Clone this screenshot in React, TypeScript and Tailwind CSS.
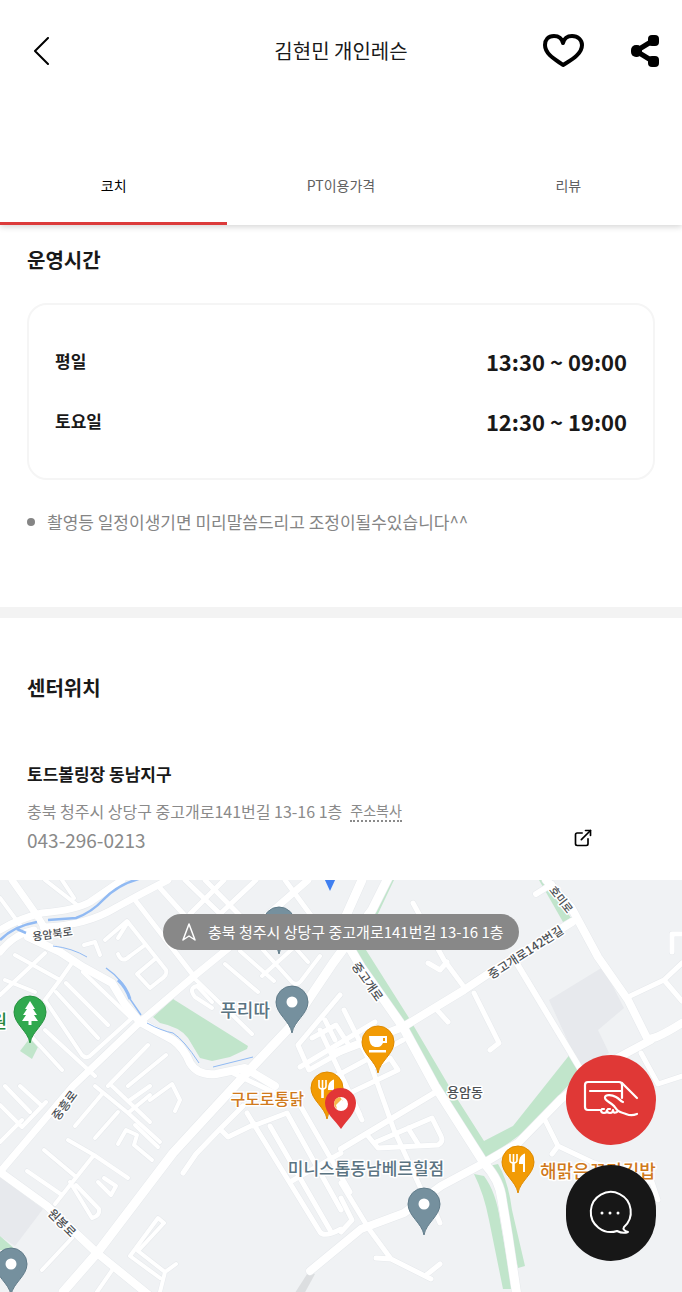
import { useState } from "react";
import { ExternalLink } from "lucide-react";

const tabs = ["코치", "PT이용가격", "리뷰"];

const hours = [
  { day: "평일", time: "13:30 ~ 09:00" },
  { day: "토요일", time: "12:30 ~ 19:00" },
];

const address = "충북 청주시 상당구 중고개로141번길 13-16 1층";

const roads = [
  // side streets, north west
  { w: 4, d: "M0 115L45 73M15 75L60 100L74 80M5 100L35 112M60 100L45 120L82 175Q87 180 92 174L132 138M66 103L108 145M56 112L98 158M83 92L130 137" },
  { w: 4, d: "M0 18L20 45M45 0L76 24M62 0L74 18M45 150L95 196M148 165L108 206M166 175L128 206M30 155L62 190" },
  { w: 5, d: "M135 20L193 95M160 8L196 48M185 0L242 55M205 0L264 60M190 34L224 0M220 34L256 0M285 0L318 45L340 66" },
  { w: 4, d: "M84 65L95 62L100 75M105 60L127 41L166 90Q168 95 160 100L150 108L137 94L155 79M128 42L118 58M118 74Q122 84 130 76L145 65" },
  { w: 4, d: "M193 97L252 154M212 122L197 106Q188 108 195 117L212 128M225 84L258 112M240 71L274 101M255 61L292 102Q297 106 301 101L320 76M275 45L308 82M262 96L300 62" },
  { w: 5, d: "M340 115L298 165L309 190L350 167L336 145L312 158M325 140L335 160" },
  // side streets, south west
  { w: 4, d: "M95 206L128 233L160 262M128 233L150 215M75 246L102 214M95 258L118 232M112 206L150 242M118 264L126 250L137 255L134 265L152 280M135 245L158 267" },
  { w: 4, d: "M130 220L150 206M150 220L172 204L180 220L175 231M0 225L22 247L46 222M0 262L22 240M20 206L42 226M5 206L30 232" },
  { w: 4, d: "M44 270L75 296M27 291L62 315M68 260L94 275L128 298M94 275L55 324M70 302L92 338Q100 336 99 329L76 305M98 302L111 315L116 306L104 298" },
  { w: 4, d: "M42 390L72 358M97 412L115 386M130 376L158 338L164 343L138 371L165 392L160 412M130 376L160 398M165 392L176 384" },
  // streets around the centre
  { w: 5, d: "M243 226L220 249L196 274L183 293M220 249L228 257L255 244M247 233L320 352Q324 358 341 349M253 246L287 233L341 330M270 246L330 350M300 225L350 312M290 302L341 273M233 193L275 213" },
  { w: 5, d: "M300 187L375 142M318 206L403 160M344 130L369 180L394 250L421 309M320 150L360 235M352 212L398 190L390 178L372 188M362 240L342 200" },
  { w: 6, d: "M341 269L436 212" },
  { w: 5, d: "M368 256L378 268L438 265Q444 262 441 256L432 238L376 262M408 248L418 264M341 303L369 349M341 318L352 340L341 352" },
  { w: 5, d: "M369 349L391 379L431 399M425 396L440 384M391 379L376 378M433 327L440 343" },
  // streets, east
  { w: 5, d: "M413 23L444 80L464 107M428 83L440 90L447 82M474 113L499 163L490 170M437 130L448 142" },
  { w: 5, d: "M544 238L558 266L594 283L652 302L658 320M558 266L552 274M628 117L664 100L682 83M664 100L682 121M672 72L672 54L682 54M641 173L658 204L682 196" },
  { w: 6, d: "M516 82L581 190M536 14L552 4" },
  // main roads
  { w: 7, d: "M0 50Q20 38 42 33Q76 30 90 22L122 0M43 47Q86 46 117 27Q144 12 168 0" },
  { w: 7, d: "M0 72Q14 54 34 50M12 0L36 34L46 50" },
  { w: 8, d: "M28 57L60 72L83 87L112 103L124 123L140 142L173 160Q184 168 190 183Q198 196 216 194L245 188L275 206" },
  { w: 7, d: "M0 292L73 206L140 142L193 97L247 53L308 0" },
  { w: 9, d: "M63 412L97 373L173 273L243 197L290 147L333 83L372 30L390 -6M362 0L345 38" },
  { w: 8, d: "M0 292L47 326L97 373L150 416" },
  { w: 8, d: "M335 173L403 147L464 110L491 92L572 42M546 0L571 27L598 77L628 120L647 158Q652 162 682 143M651 160L608 183L561 219L518 263L484 283L441 306L404 333L361 349L310 391" },
  { w: 9, d: "M345 60L361 87L403 147L435 206L484 283Q500 300 502 320L508 356L517 416" },
];

const streetLabels = [
  { text: "용암북로", x: 53, y: 58, rotate: -8, size: 11 },
  { text: "중고개로", x: 364, y: 104, rotate: 55, size: 12 },
  { text: "중고개로142번길", x: 528, y: 76, rotate: -33, size: 12 },
  { text: "호미로", x: 558, y: 22, rotate: 52, size: 11 },
  { text: "용암동", x: 465, y: 217, rotate: 0, size: 13 },
  { text: "중흥로", x: 68, y: 228, rotate: -53, size: 12 },
  { text: "원봉로", x: 59, y: 346, rotate: 45, size: 12 },
];

const placeLabels = [
  { text: "푸리따", x: 270, y: 137, color: "#5b7482", anchor: "end", size: 18 },
  { text: "구도로통닭", x: 304, y: 225, color: "#d07a1c", anchor: "end", size: 16 },
  { text: "미니스톱동남베르힐점", x: 366, y: 295, color: "#5b7482", anchor: "middle", size: 17 },
  { text: "해맑은꼬마김밥", x: 540, y: 298, color: "#d07a1c", anchor: "start", size: 18 },
  { text: "원", x: 7, y: 148, color: "#25863b", anchor: "end", size: 18 },
] as const;

type PinProps = { x: number; y: number; color: string; border: string; kind?: "dot" | "food" | "cup" | "tree" };

// x and y give the tip of the pin
function Pin({ x, y, color, border, kind = "dot" }: PinProps) {
  return (
    <g transform={`translate(${x} ${y})`}>
      <path
        d="M0 0C-2 -12 -16 -19 -16 -31A16 16 0 0 1 16 -31C16 -19 2 -12 0 0Z"
        fill={color}
        stroke={border}
      />
      {kind === "dot" && <circle cy="-31" r="5.5" fill="#fff" />}
      {kind === "food" && (
        <g stroke="#fff" strokeWidth="1.6" fill="none">
          <path d="M-8 -39V-33Q-8 -30 -4.5 -30Q-1 -30 -1 -33V-39M-4.5 -39V-30" />
          <path d="M-4.5 -31V-21" strokeWidth="2.6" />
          <path d="M6 -21V-38Q2 -36 2 -30H5" fill="#fff" strokeWidth="2" />
        </g>
      )}
      {kind === "cup" && (
        <g>
          <path d="M-9 -37H9V-30H5Q3 -26 0 -26H-3Q-9 -27 -9 -37Z" fill="#fff" />
          <rect x="5" y="-35" width="2" height="3" fill={color} />
          <rect x="-9" y="-23" width="17" height="2.5" fill="#fff" />
        </g>
      )}
      {kind === "tree" && (
        <path d="M0 -42L5 -34H3L7 -28H4L8 -22H1.5V-18H-1.5V-22H-8L-4 -28H-7L-3 -34H-5Z" fill="#fff" />
      )}
    </g>
  );
}

function LocationMap() {
  return (
    <svg
      className="block h-full w-full"
      viewBox="0 0 682 412"
      preserveAspectRatio="xMidYMid slice"
      role="img"
      aria-label="센터위치 지도"
    >
      <rect width="682" height="412" fill="#f0f2f4" />
      <g fill="#e7e9ed">
        <path d="M549 120L603 87L624 128L598 150L609 173L581 190Z" />
        <path d="M0 297L43 329L15 366L0 356Z" />
      </g>
      <path d="M309 391L293 416H303L315 394Z" fill="#dcdee0" />
      <g fill="#c1e5cb">
        <path d="M173 119L153 137L160 143Q180 147 188 158L200 178L212 181L230 177L247 169L248 166Z" />
        <path d="M30 158L39 165L32 179L20 171Z" />
        <path d="M386 0H394L376 38L366 70L409 138L449 206L484 261L513 246L571 173L583 190L561 213L528 249L485 280L438 206L398 141L352 70L370 35Z" />
        <path d="M474 294L484 296Q496 312 500 340L512 409H503L489 340Q484 314 474 294Z" />
        <path d="M489 286L498 284Q508 300 512 330L525 386L518 388L506 340Q502 310 489 286Z" />
        <path d="M539 0H546L571 38L563 42Z" />
        <path d="M0 356L16 370H0Z" />
      </g>
      <g fill="none" strokeLinejoin="round" strokeLinecap="round">
        {roads.map((r) => (
          <path key={r.d} d={r.d} stroke="#e6e9ec" strokeWidth={r.w + 1} />
        ))}
        {roads.map((r) => (
          <path key={r.d} d={r.d} stroke="#fff" strokeWidth={r.w} />
        ))}
      </g>
      <g fill="none" stroke="#91baf3">
        <path d="M0 60Q14 46 37 42M17 49L26 53M48 40L76 38Q92 32 103 20Q118 4 142 -2" strokeWidth="2.5" />
        <path d="M53 66Q72 68 87 77" />
        <path d="M106 88Q124 100 130 119L141 135" strokeWidth="1.5" />
        <path d="M118 100Q126 107 130 119" strokeWidth="3" />
        <path d="M147 143Q162 151 173 153Q184 160 199 183M213 187L253 177" />
      </g>
      <g
        fontFamily='"Noto Sans CJK KR", sans-serif'
        fontWeight="500"
        stroke="#fff"
        strokeWidth="3"
        strokeLinejoin="round"
        paintOrder="stroke"
      >
        {streetLabels.map((l) => (
          <text
            key={l.text}
            textAnchor="middle"
            transform={`translate(${l.x} ${l.y}) rotate(${l.rotate})`}
            fontSize={l.size}
            fill="#4c5054"
          >
            {l.text}
          </text>
        ))}
        {placeLabels.map((l) => (
          <text key={l.text} x={l.x} y={l.y} textAnchor={l.anchor} fontSize={l.size} fill={l.color}>
            {l.text}
          </text>
        ))}
      </g>
      <path d="M324 -2L330 11L336 -2Z" fill="#3f7ff0" />
      <Pin x={279} y={74} color="#75909e" border="#617c8a" />
      <Pin x={292} y={153} color="#75909e" border="#617c8a" />
      <Pin x={424} y={355} color="#75909e" border="#617c8a" />
      <Pin x={11} y={415} color="#75909e" border="#617c8a" />
      <Pin x={30} y={163} color="#31a94f" border="#25913f" kind="tree" />
      <Pin x={378} y={193} color="#f29b05" border="#df8a00" kind="cup" />
      <Pin x={518} y={313} color="#f29b05" border="#df8a00" kind="food" />
      <Pin x={327} y={239} color="#f29b05" border="#df8a00" kind="food" />
      <path d="M341 249C335 240 325 233 325 223A15.5 15 0 0 1 356 223C356 233 347 240 341 249Z" fill="#e23637" />
      <circle cx="341" cy="224" r="7" fill="#fff" />
      <path d="M334 224A7 7 0 0 1 340 217L343 221L337 229A7 7 0 0 1 334 224Z" fill="#f6b64a" />
      <path d="M336 225L342 219L346 229H337Z" fill="#fff" />
    </svg>
  );
}

function PayIcon() {
  return (
    <svg viewBox="0 0 90 90" className="h-full w-full" fill="none" stroke="#fff" strokeWidth="2.2" strokeLinecap="round" strokeLinejoin="round">
      <path d="M34 55H22Q19 55 19 52V30Q19 27 22 27H53Q56 27 56 30V43M24 36H55" />
      <path d="M56 28L71 43" />
      <path d="M57 47C54 46 54 44 50 42C46 40 40 39 39 42C38 46 45 47 48 51C51 55 52 57 57 58C62 59 63 62 71 59" />
      <path d="M35 55Q35 58 38 58Q41 58 41 55Q41 58 44 58Q47 58 47 55Q47 59 51 57M36 54H38M42 54H44" />
    </svg>
  );
}

function ChatIcon() {
  return (
    <svg viewBox="0 0 90 96" className="h-full w-full" fill="none" stroke="#fff" strokeWidth="2" strokeLinejoin="round">
      <path d="M51 66A20 20 0 1 1 58 62Q56 65 62 67Q57 69 51 66Z" />
      <g fill="#fff" stroke="none">
        <circle cx="36" cy="48" r="1.5" />
        <circle cx="44" cy="48" r="1.5" />
        <circle cx="52" cy="48" r="1.5" />
      </g>
    </svg>
  );
}

export default function App() {
  const [active, setActive] = useState(0);

  return (
    <main className="bg-white font-['Noto_Sans_CJK_KR',sans-serif] text-[#191919]">
      <header className="bg-white shadow-[0_2px_6px_rgba(0,0,0,0.16)]">
        <div className="grid h-[102px] grid-cols-[1fr_auto_1fr] items-center px-[22px]">
          <button type="button" aria-label="뒤로" className="justify-self-start px-2.5">
            <svg width="18" height="28" viewBox="0 0 18 28" fill="none" stroke="#000" strokeWidth="2" strokeLinecap="round" strokeLinejoin="round">
              <path d="M16 1L3 14L16 27" />
            </svg>
          </button>
          <h1 className="text-xl">김현민 개인레슨</h1>
          <div className="flex items-center justify-end gap-[46px]">
            <button type="button" aria-label="찜하기">
              <svg width="42" height="34" viewBox="0 0 42 34" fill="none" stroke="#000" strokeWidth="4" strokeLinejoin="round">
                <path d="M21 31C16 27 3 21 3 11C3 6 6 2 12 2C17 2 20 5 21 9C22 5 25 2 30 2C36 2 40 6 40 11C40 21 27 27 21 31Z" />
              </svg>
            </button>
            <button type="button" aria-label="공유">
              <svg width="30" height="32" viewBox="0 0 30 32">
                <path d="M24 5L6 16L24 27" fill="none" stroke="#000" strokeWidth="5" />
                <rect x="18" y="0" width="11" height="11" rx="4" />
                <rect x="1" y="10" width="11" height="12" rx="5" />
                <rect x="18" y="21" width="11" height="11" rx="4" />
              </svg>
            </button>
          </div>
        </div>
        <nav className="mt-[45px] grid grid-cols-3">
          {tabs.map((tab, i) => (
            <button
              key={tab}
              type="button"
              onClick={() => setActive(i)}
              className={`h-[78px] border-b-[3px] text-sm ${
                i === active ? "border-[#dc3b3b] text-black" : "border-transparent text-[#606060]"
              }`}
            >
              {tab}
            </button>
          ))}
        </nav>
      </header>

      <section className="border-b-[11px] border-[#f3f3f3] px-[27px] pt-5 pb-[71px]">
        <h2 className="text-xl leading-[30px] font-bold">운영시간</h2>
        <dl className="mt-7 rounded-[20px] border-2 border-[#f5f5f5] px-[26px] pt-[26px] pb-[27px]">
          {hours.map((h) => (
            <div key={h.day} className="flex h-[60px] items-center justify-between leading-[30px] font-bold">
              <dt className="text-[17px]">{h.day}</dt>
              <dd className="text-[22px]">{h.time}</dd>
            </div>
          ))}
        </dl>
        <ul className="mt-7">
          <li className="flex items-center gap-3 text-[17px] leading-[28px] text-[#858585]">
            <span className="size-2 rounded-full bg-[#858585]" />
            촬영등 일정이생기면 미리말씀드리고 조정이될수있습니다^^
          </li>
        </ul>
      </section>

      <section className="px-[27px] pt-[55px] pb-[25px]">
        <h2 className="text-xl leading-[30px] font-bold">센터위치</h2>
        <h3 className="mt-14 text-[17px] leading-[30px] font-bold">토드볼링장 동남지구</h3>
        <p className="mt-2 flex items-center gap-2 text-base leading-[28px] text-[#8a8a8a]">
          {address}
          <button type="button" className="border-b-2 border-dotted border-[#8a8a8a] text-sm">
            주소복사
          </button>
        </p>
        <div className="flex items-center justify-between pr-[62px] text-[#8a8a8a]">
          <a href="tel:043-296-0213" className="text-[19px] leading-[30px]">043-296-0213</a>
          <a href="#map" aria-label="지도 열기" className="pb-1 text-black">
            <ExternalLink size={20} strokeWidth={2} />
          </a>
        </div>
      </section>

      <section id="map" className="relative h-[412px] overflow-hidden">
        <LocationMap />
        <div className="absolute top-[34px] left-1/2 flex h-9 w-[356px] -translate-x-1/2 items-center gap-3 rounded-full bg-[#888] pl-[19px] text-[15px] whitespace-nowrap text-white">
          <svg width="14" height="18" viewBox="0 0 14 18" fill="none" stroke="#fff" strokeWidth="1.5" strokeLinejoin="round">
            <path d="M7 1L13 17L7 13L1 17Z" />
          </svg>
          {address}
        </div>
        <div className="absolute right-[26px] bottom-[31px] flex flex-col gap-5">
          <button type="button" aria-label="결제" className="h-[90px] w-[90px] rounded-full bg-[#e03836]">
            <PayIcon />
          </button>
          <button type="button" aria-label="채팅 상담" className="h-24 w-[90px] rounded-[45px] bg-[#171717]">
            <ChatIcon />
          </button>
        </div>
      </section>
    </main>
  );
}
